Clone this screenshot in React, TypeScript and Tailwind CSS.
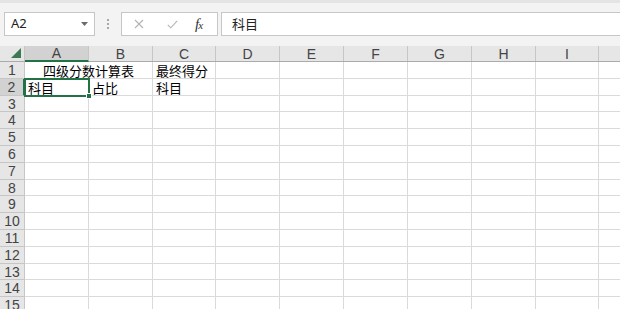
import React from "react";

const cols = [
  { name: "A", w: "w-[64px]" },
  { name: "B", w: "w-[64px]" },
  { name: "C", w: "w-[63px]" },
  { name: "D", w: "w-[64px]" },
  { name: "E", w: "w-[64px]" },
  { name: "F", w: "w-[64px]" },
  { name: "G", w: "w-[64px]" },
  { name: "H", w: "w-[64px]" },
  { name: "I", w: "w-[63px]" },
  { name: "", w: "w-[40px]" },
];

// row heights include the bottom gridline
const rowH = [
  "h-[17px]", "h-[17px]", "h-[16px]", "h-[17px]", "h-[17px]",
  "h-[17px]", "h-[17px]", "h-[16px]", "h-[17px]", "h-[17px]",
  "h-[17px]", "h-[17px]", "h-[16px]", "h-[17px]", "h-[17px]",
];

const cells: Record<string, { text: string; pad: string }> = {
  "0-0": { text: "四级分数计算表", pad: "pl-[18px]" },
  "0-2": { text: "最终得分", pad: "pl-[3px]" },
  "1-0": { text: "科目", pad: "pl-[3px]" },
  "1-1": { text: "占比", pad: "pl-[3px]" },
  "1-2": { text: "科目", pad: "pl-[3px]" },
};

function FormulaBar() {
  return (
    <div className="h-[46px] bg-[#f3f3f3] border-t-[3px] border-[#e4e4e4] flex items-start pt-[9px] pl-[4px]">
      <div className="w-[91px] h-[24px] bg-white border border-[#c6c6c6] flex items-center justify-between pl-[6px] pr-[6px]">
        <span className="text-[13px] text-[#222] font-['Noto_Sans',sans-serif]">A2</span>
        <svg width="7" height="4" viewBox="0 0 7 4">
          <path d="M0 0 L7 0 L3.5 4 Z" fill="#6b6b6b" />
        </svg>
      </div>
      <div className="w-[26px] h-[24px] flex flex-col items-center justify-center gap-[2px]">
        <span className="w-[2px] h-[2px] bg-[#a8a8a8]" />
        <span className="w-[2px] h-[2px] bg-[#a8a8a8]" />
        <span className="w-[2px] h-[2px] bg-[#a8a8a8]" />
      </div>
      <div className="w-[97px] h-[24px] bg-white border border-[#c6c6c6] flex items-center">
        <svg className="ml-[12px]" width="10" height="10" viewBox="0 0 10 10">
          <path d="M1 1 L9 9 M9 1 L1 9" stroke="#b3b3b3" strokeWidth="1.1" />
        </svg>
        <svg className="ml-[23px]" width="11" height="9" viewBox="0 0 11 9">
          <path d="M0.8 4.8 L3.8 7.8 L10.2 0.8" stroke="#b3b3b3" strokeWidth="1.1" fill="none" />
        </svg>
        <span className="ml-[17px] text-[15px] italic text-[#333] font-['Liberation_Serif',serif] tracking-[-1px]">
          f<span className="text-[11px]">x</span>
        </span>
      </div>
      <div className="flex-1 ml-[3px] h-[24px] bg-white border border-[#c6c6c6] border-r-0 flex items-center pl-[10px]">
        <span className="text-[13px] text-[#222] font-['Noto_Sans_CJK_SC',sans-serif]">科目</span>
      </div>
    </div>
  );
}

function HeaderRow() {
  return (
    <div className="flex h-[16px] bg-[#e6e6e6] border-b border-[#ababab]">
      <div className="w-[25px] shrink-0 border-r border-[#c6c6c6] flex items-end justify-end pr-[3px] pb-[3px]">
        <svg width="10" height="10" viewBox="0 0 10 10">
          <path d="M10 0 L10 10 L0 10 Z" fill="#3d7a52" />
        </svg>
      </div>
      {cols.map((c, i) => (
        <div
          key={i}
          className={`${c.w} shrink-0 flex items-center justify-center text-[14px] leading-none text-[#444] font-['Liberation_Sans',sans-serif] border-r border-[#c6c6c6] ${
            i === 0 ? "bg-[#d2d2d2] border-b-2 border-b-[#217346] -mb-[1px]" : ""
          }`}
        >
          {c.name}
        </div>
      ))}
    </div>
  );
}

export default function App() {
  return (
    <div className="w-[620px] h-[309px] overflow-hidden bg-white">
      <FormulaBar />
      <div className="relative">
        <HeaderRow />
        {rowH.map((h, r) => (
          <div key={r} className={`flex ${h}`}>
            <div
              className={`w-[25px] shrink-0 border-b border-r flex items-center justify-center text-[14px] leading-none text-[#444] font-['Liberation_Sans',sans-serif] ${
                r === 1
                  ? "bg-[#d2d2d2] border-b-[#c6c6c6] border-r-2 border-r-[#217346]"
                  : "bg-[#e6e6e6] border-[#c6c6c6]"
              }`}
            >
              {r + 1}
            </div>
            {cols.map((c, i) => {
              const cell = cells[`${r}-${i}`];
              const hideRight = r === 0 && i === 0;
              return (
                <div
                  key={i}
                  className={`${c.w} shrink-0 border-b border-[#dadada] flex items-center whitespace-nowrap ${
                    hideRight ? "border-r border-r-white" : "border-r"
                  }`}
                >
                  {cell && (
                    <span
                      className={`${cell.pad} inline-block text-[13px] leading-[13px] text-black font-['Noto_Sans_CJK_SC',sans-serif] relative z-10`}
                    >
                      {cell.text}
                    </span>
                  )}
                </div>
              );
            })}
          </div>
        ))}
        <div className="absolute left-[24px] top-[32px] w-[66px] h-[19px] border-2 border-[#217346] pointer-events-none" />
        <div className="absolute left-[86px] top-[47px] w-[6px] h-[6px] bg-[#217346] border border-white" />
      </div>
    </div>
  );
}
